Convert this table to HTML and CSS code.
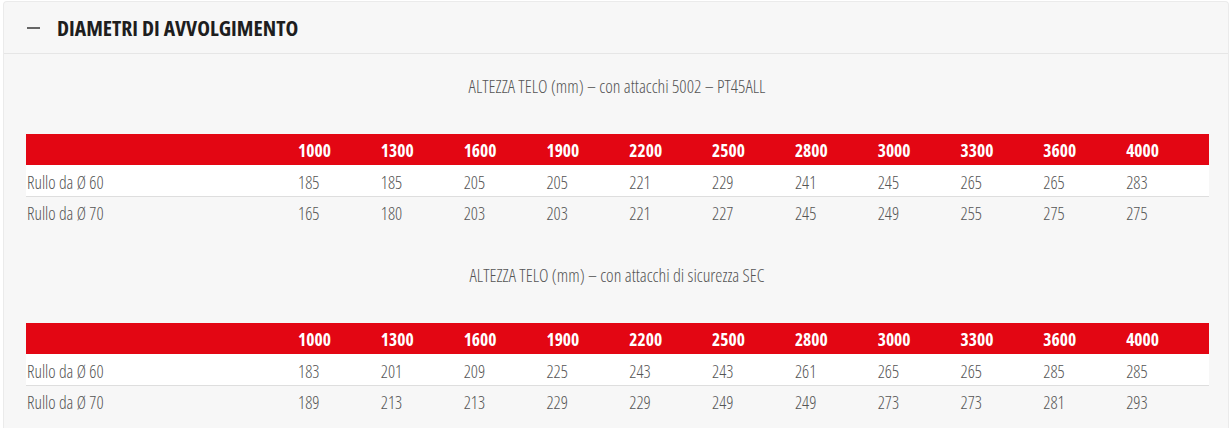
FILE: index.html
```html
<!DOCTYPE html>
<html lang="it">
<head>
<meta charset="utf-8">
<title>Diametri di avvolgimento</title>
<link rel="stylesheet" href="styles.css">
</head>
<body>
<section class="panel">
  <div class="panel-head">
    <span class="minus"></span>
    <h2 class="panel-title">DIAMETRI DI AVVOLGIMENTO</h2>
  </div>
  <div class="panel-body">
    <p class="caption">ALTEZZA TELO (mm) – con attacchi 5002 – PT45ALL</p>
    <table class="dtable">
      <thead>
        <tr><th></th><th>1000</th><th>1300</th><th>1600</th><th>1900</th><th>2200</th><th>2500</th><th>2800</th><th>3000</th><th>3300</th><th>3600</th><th>4000</th></tr>
      </thead>
      <tbody>
        <tr class="odd"><td>Rullo da Ø 60</td><td>185</td><td>185</td><td>205</td><td>205</td><td>221</td><td>229</td><td>241</td><td>245</td><td>265</td><td>265</td><td>283</td></tr>
        <tr><td>Rullo da Ø 70</td><td>165</td><td>180</td><td>203</td><td>203</td><td>221</td><td>227</td><td>245</td><td>249</td><td>255</td><td>275</td><td>275</td></tr>
      </tbody>
    </table>
    <p class="caption second">ALTEZZA TELO (mm) – con attacchi di sicurezza SEC</p>
    <table class="dtable">
      <thead>
        <tr><th></th><th>1000</th><th>1300</th><th>1600</th><th>1900</th><th>2200</th><th>2500</th><th>2800</th><th>3000</th><th>3300</th><th>3600</th><th>4000</th></tr>
      </thead>
      <tbody>
        <tr class="odd"><td>Rullo da Ø 60</td><td>183</td><td>201</td><td>209</td><td>225</td><td>243</td><td>243</td><td>261</td><td>265</td><td>265</td><td>285</td><td>285</td></tr>
        <tr><td>Rullo da Ø 70</td><td>189</td><td>213</td><td>213</td><td>229</td><td>229</td><td>249</td><td>249</td><td>273</td><td>273</td><td>281</td><td>293</td></tr>
      </tbody>
    </table>
  </div>
</section>
</body>
</html>
```

FILE: styles.css
```css
html, body {
  margin: 0;
  padding: 0;
  background: #ffffff;
}
body {
  padding: 1px 3px 0 3px;
  font-family: "Open Sans", "Liberation Sans Narrow", "Liberation Sans", sans-serif;
  font-stretch: 75%;
}
.panel {
  background: #f7f7f7;
  border: 1px solid #ebebeb;
  border-bottom: none;
  border-radius: 4px 4px 0 0;
  height: 440px;
  box-sizing: border-box;
}
.panel-head {
  display: flex;
  align-items: center;
  height: 51px;
  border-bottom: 1px solid #e6e6e6;
  padding-left: 23px;
}
.minus {
  width: 13px;
  height: 2px;
  background: #666;
  margin-right: 17px;
  margin-top: 1px;
}
.panel-title {
  margin: 0;
  font-size: 21.6px;
  line-height: 26px;
  font-weight: 700;
  color: #1e1e1e;
}
.panel-body {
  padding: 0 20px 0 22px;
}
.caption {
  margin: 0;
  text-align: center;
  font-size: 18px;
  font-weight: 300;
  color: #555;
  height: 80px;
  line-height: 20px;
  padding-top: 22px;
  box-sizing: border-box;
}
.caption.second {
  height: 96px;
  padding-top: 38px;
}
.dtable {
  width: 1183px;
  border-collapse: collapse;
  table-layout: fixed;
}
.dtable th:first-child, .dtable td:first-child {
  width: 272px;
}
.dtable thead tr { height: 31px; }
.dtable tbody tr { height: 31px; }
.dtable th {
  background: #e30613;
  color: #fff;
  font-weight: 700;
  font-size: 17.5px;
  line-height: 20px;
  text-align: left;
  padding: 0;
}
.dtable td {
  font-size: 17.5px;
  line-height: 20px;
  font-weight: 300;
  color: #555;
  text-align: left;
  padding: 3px 0 0 0;
}
.dtable td:first-child { padding-left: 1px; }
.dtable tr.odd td {
  background: #fff;
  border-bottom: 1px solid #dedede;
}
```
